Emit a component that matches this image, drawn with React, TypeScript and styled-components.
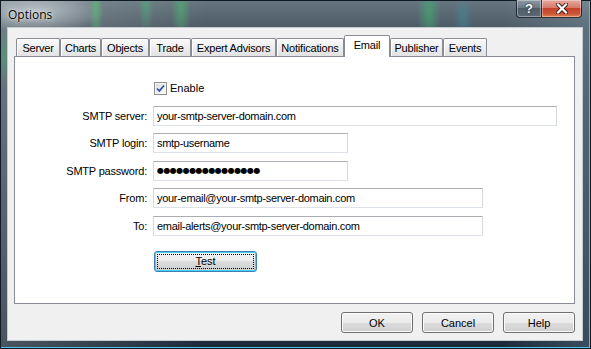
import React from "react";
import styled, { createGlobalStyle } from "styled-components";

const GlobalStyle = createGlobalStyle`
  html, body {
    margin: 0;
    padding: 0;
    background: #ffffff;
  }
  body {
    font-family: "Liberation Sans", Arial, sans-serif;
  }
`;

const tabs = [
  { label: "Server", width: 44 },
  { label: "Charts", width: 41 },
  { label: "Objects", width: 48 },
  { label: "Trade", width: 42 },
  { label: "Expert Advisors", width: 85 },
  { label: "Notifications", width: 68 },
  { label: "Email", width: 46, active: true },
  { label: "Publisher", width: 53 },
  { label: "Events", width: 44 },
];

const fields = [
  { label: "SMTP server:", value: "your-smtp-server-domain.com", width: 404 },
  { label: "SMTP login:", value: "smtp-username", width: 195 },
  { label: "SMTP password:", value: "", width: 195, secret: true },
  { label: "From:", value: "your-email@your-smtp-server-domain.com", width: 330 },
  { label: "To:", value: "email-alerts@your-smtp-server-domain.com", width: 330 },
];

export default function App() {
  return (
    <>
      <GlobalStyle />
      <Window>
        <TitleBar>
          <Title>Options</Title>
          <CaptionButtons>
            <HelpCaption>?</HelpCaption>
            <CloseCaption>
              <svg width="12" height="11" viewBox="0 0 12 11">
                <path d="M2 1.5 L10 9.5 M10 1.5 L2 9.5" stroke="#3a1a14" strokeWidth="4" strokeLinecap="square" />
                <path d="M2 1.5 L10 9.5 M10 1.5 L2 9.5" stroke="#ffffff" strokeWidth="2.2" strokeLinecap="square" />
              </svg>
            </CloseCaption>
          </CaptionButtons>
        </TitleBar>
        <Client>
          <TabStrip>
            {tabs.map((t) => (
              <Tab key={t.label} $w={t.width} $active={!!t.active}>
                {t.label}
              </Tab>
            ))}
          </TabStrip>
          <Panel>
            <Form>
              <span />
              <CheckRow>
                <CheckBox>
                  <svg width="9" height="9" viewBox="0 0 9 9">
                    <path d="M1 4.5 L3.4 7 L8 1.5" fill="none" stroke="#2a4fa8" strokeWidth="1.7" />
                  </svg>
                </CheckBox>
                Enable
              </CheckRow>
              {fields.map((f) => (
                <React.Fragment key={f.label}>
                  <Label>{f.label}</Label>
                  {f.secret ? (
                    <Secret $w={f.width} readOnly value={"\u25CF".repeat(16)} />
                  ) : (
                    <TextInput $w={f.width} readOnly value={f.value} />
                  )}
                </React.Fragment>
              ))}
              <span />
              <TestButton>
                <u>T</u>est
              </TestButton>
            </Form>
          </Panel>
          <ButtonRow>
            <DialogButton>OK</DialogButton>
            <DialogButton>Cancel</DialogButton>
            <DialogButton>Help</DialogButton>
          </ButtonRow>
        </Client>
      </Window>
    </>
  );
}

const Window = styled.div`
  width: 591px;
  height: 349px;
  box-sizing: border-box;
  display: flex;
  flex-direction: column;
  padding: 0 7px 7px 6px;
  border: 1px solid #101a24;
  box-shadow: inset -1px -1px 0 #4ec0ec;
  background:
    radial-gradient(ellipse 7px 40px at 95px 6px, rgba(80, 200, 110, 0.55), transparent),
    radial-gradient(ellipse 8px 28px at 145px 4px, rgba(70, 190, 120, 0.45), transparent),
    radial-gradient(ellipse 10px 34px at 180px 8px, rgba(70, 200, 110, 0.5), transparent),
    radial-gradient(ellipse 12px 34px at 428px 12px, rgba(60, 190, 110, 0.55), transparent),
    radial-gradient(ellipse 10px 26px at 462px 16px, rgba(60, 150, 160, 0.45), transparent),
    radial-gradient(ellipse 6px 30px at 3px 55px, rgba(70, 170, 110, 0.55), transparent),
    radial-gradient(ellipse 70px 22px at 34px 10px, rgba(205, 212, 218, 0.75), transparent),
    linear-gradient(90deg, rgba(255, 255, 255, 0.2), transparent 35%, transparent 85%, rgba(150, 180, 200, 0.25)),
    linear-gradient(180deg, #66757f 0px, #4d5b66 26px, #3b4a56 120px, #1c2a38 100%);
`;

const TitleBar = styled.div`
  height: 26px;
  display: flex;
  align-items: flex-start;
  justify-content: space-between;
`;

const Title = styled.div`
  align-self: center;
  padding-left: 1px;
  font-family: "Open Sans", "Noto Sans", sans-serif;
  font-size: 12px;
  color: #000;
  text-shadow: 0 0 6px rgba(255, 255, 255, 0.9), 0 0 2px rgba(255, 255, 255, 0.8);
`;

const CaptionButtons = styled.div`
  display: flex;
  margin-top: -1px;
  margin-right: 1px;
`;

const CaptionButton = styled.div`
  height: 18px;
  box-sizing: border-box;
  display: flex;
  align-items: center;
  justify-content: center;
  border: 1px solid rgba(20, 30, 40, 0.85);
  border-top: none;
  box-shadow: inset 0 0 0 1px rgba(255, 255, 255, 0.35);
`;

const HelpCaption = styled(CaptionButton)`
  width: 25px;
  border-right: none;
  border-bottom-left-radius: 4px;
  background: linear-gradient(180deg, #8d9aa5 0%, #6c7a86 45%, #4f5d69 50%, #5d6b78 100%);
  color: #fff;
  font-family: "Liberation Sans", Arial, sans-serif;
  font-weight: bold;
  font-size: 13px;
  text-shadow: 0 0 2px #1a2530, 0 0 1px #1a2530;
`;

const CloseCaption = styled(CaptionButton)`
  width: 41px;
  border-bottom-right-radius: 4px;
  background: linear-gradient(180deg, #e6aa9f 0%, #d77a6a 45%, #c5432b 50%, #cc5436 80%, #e2834f 100%);
`;

const Client = styled.div`
  flex: 1;
  display: flex;
  flex-direction: column;
  background: #f0f0f0;
  border: 1px solid #c3cbd3;
  padding: 7px 7px 7px 6px;
`;

const TabStrip = styled.div`
  display: flex;
  align-items: flex-end;
  height: 21px;
  padding-left: 2px;
`;

const Tab = styled.div<{ $w: number; $active: boolean }>`
  width: ${({ $w }) => $w}px;
  height: ${({ $active }) => ($active ? 22 : 18)}px;
  box-sizing: border-box;
  display: flex;
  align-items: center;
  justify-content: center;
  padding-bottom: ${({ $active }) => ($active ? 4 : 0)}px;
  margin-bottom: ${({ $active }) => ($active ? -1 : 0)}px;
  position: relative;
  z-index: ${({ $active }) => ($active ? 1 : 0)};
  border: 1px solid #898c95;
  border-bottom: none;
  border-radius: 2px 2px 0 0;
  background: ${({ $active }) =>
    $active ? "#ffffff" : "linear-gradient(180deg, #fbfbfb 0%, #eeeeee 50%, #e2e2e2 100%)"};
  box-shadow: ${({ $active }) => ($active ? "none" : "inset 1px 1px 0 #ffffff")};
  font-size: 11px;
  letter-spacing: -0.2px;
  color: #000;
  white-space: nowrap;
`;

const Panel = styled.div`
  flex: 1;
  background: #ffffff;
  border: 1px solid #898c95;
`;

const Form = styled.div`
  display: grid;
  grid-template-columns: 132px auto;
  grid-auto-rows: 20px;
  column-gap: 6px;
  row-gap: 7.5px;
  padding-top: 21px;
  justify-items: start;
`;

const Label = styled.div`
  justify-self: end;
  align-self: center;
  font-size: 11px;
  letter-spacing: -0.2px;
  color: #000;
  white-space: nowrap;
`;

const CheckRow = styled.label`
  display: flex;
  align-items: center;
  gap: 3px;
  margin-left: 1px;
  font-size: 11px;
  color: #000;
`;

const CheckBox = styled.span`
  width: 13px;
  height: 13px;
  box-sizing: border-box;
  display: inline-flex;
  align-items: center;
  justify-content: center;
  border: 1px solid #8e8f8f;
  background: linear-gradient(135deg, #d6d8dc 0%, #f4f4f4 70%, #ffffff 100%);
  box-shadow: inset 0 0 0 1px #f6f6f6;
`;

const TextInput = styled.input<{ $w: number }>`
  width: ${({ $w }) => $w}px;
  height: 20px;
  box-sizing: border-box;
  margin: 0;
  padding: 0 0 0 3px;
  border: 1px solid;
  border-color: #abadb3 #d6d9e0 #dde2e8 #d6d9e0;
  background: #ffffff;
  font-family: "Liberation Sans", Arial, sans-serif;
  font-size: 11px;
  letter-spacing: -0.3px;
  color: #000;
  outline: none;
`;

const Secret = styled(TextInput)`
  font-family: "DejaVu Sans", sans-serif;
  font-size: 8px;
  letter-spacing: -0.55px;
`;

const ButtonBase = styled.button`
  height: 21px;
  box-sizing: border-box;
  margin: 0;
  padding: 0;
  border: 1px solid #707070;
  border-radius: 3px;
  background: linear-gradient(180deg, #f2f2f2 0%, #ebebeb 50%, #dddddd 50%, #cfcfcf 100%);
  box-shadow: inset 0 0 0 1px #fbfbfb;
  font-family: "Liberation Sans", Arial, sans-serif;
  font-size: 11px;
  color: #000;
`;

const TestButton = styled(ButtonBase)`
  width: 103px;
  height: 21px;
  margin-top: 7.5px;
  margin-left: 1px;
  position: relative;
  border-color: #3c7fb1;
  box-shadow: inset 0 0 0 1px #48d0f5;
  u {
    text-decoration: underline;
  }
  &::after {
    content: "";
    position: absolute;
    inset: 2px;
    border: 1px dotted #000;
    border-radius: 1px;
  }
`;

const ButtonRow = styled.div`
  display: flex;
  justify-content: flex-end;
  gap: 9px;
  margin-top: 8px;
`;

const DialogButton = styled(ButtonBase)`
  width: 72px;
`;
